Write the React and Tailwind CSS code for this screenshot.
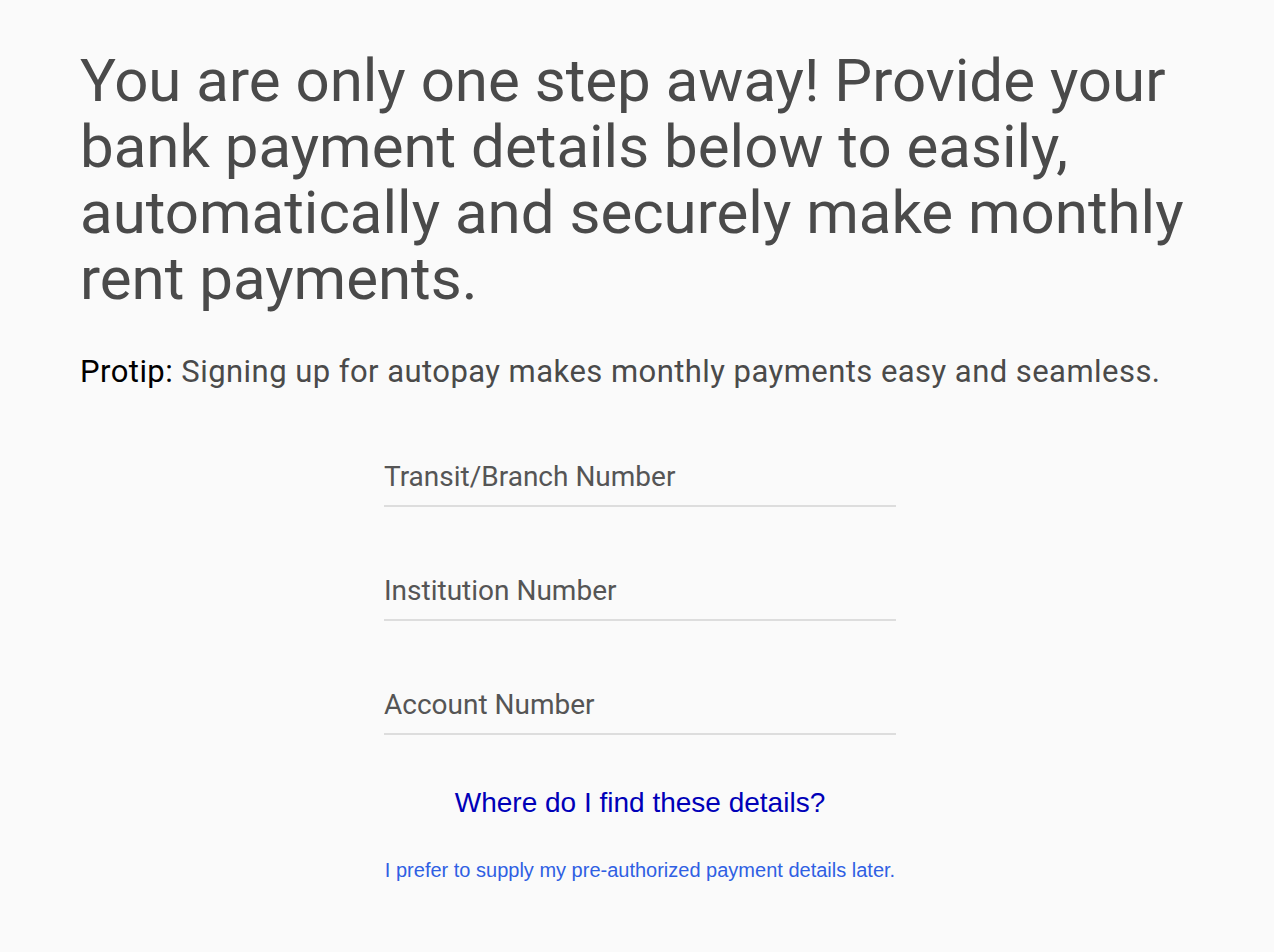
export default function App() {
  const fields = ['Transit/Branch Number', 'Institution Number', 'Account Number'];

  return (
    <div className="min-h-[952px] bg-[#fafafa] font-['Roboto',sans-serif]">
      <div className="px-[80px] pt-[48px]">
        <h1 className="text-[60px] leading-[66px] text-[#4a4a4a] font-normal max-w-[1120px]">
          You are only one step away! Provide your bank payment details below to easily, automatically and securely make monthly rent payments.
        </h1>
        <p className="mt-[42px] text-[31px] leading-[36px] tracking-[0.45px] text-[#4a4a4a]">
          <span className="text-black">Protip:</span> Signing up for autopay makes monthly payments easy and seamless.
        </p>
      </div>

      <div className="w-[512px] mt-[70px] ml-[384px] flex flex-col gap-[67px]">
        {fields.map((f) => (
          <input
            key={f}
            placeholder={f}
            className="w-full bg-transparent border-b-2 border-[#dddddd] text-[28px] leading-[34px] pb-[11px] text-[#555] placeholder:text-[#555] outline-none"
          />
        ))}
      </div>

      <div className="flex flex-col items-center pl-[6px] font-['Liberation_Sans',Arial,sans-serif]">
        <a href="#" className="mt-[52px] text-[28px] leading-[32px] text-[#0000b8]">Where do I find these details?</a>
        <a href="#" className="mt-[39px] text-[20px] leading-[24px] text-[#2f5fe3]">I prefer to supply my pre-authorized payment details later.</a>
      </div>
    </div>
  );
}
